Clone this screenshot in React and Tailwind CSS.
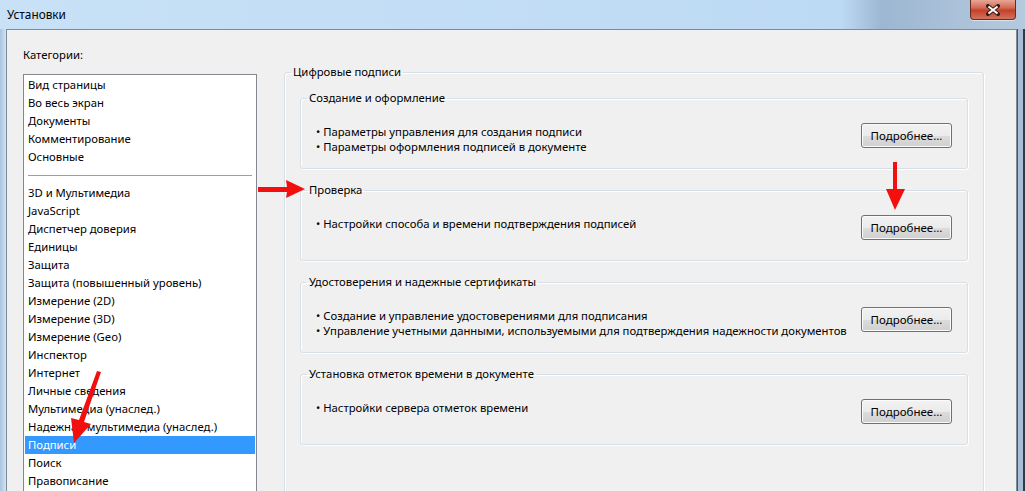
const topItems = ['Вид страницы', 'Во весь экран', 'Документы', 'Комментирование', 'Основные']
const restItems = [
  '3D и Мультимедиа',
  'JavaScript',
  'Диспетчер доверия',
  'Единицы',
  'Защита',
  'Защита (повышенный уровень)',
  'Измерение (2D)',
  'Измерение (3D)',
  'Измерение (Geo)',
  'Инспектор',
  'Интернет',
  'Личные сведения',
  'Мультимедиа (унаслед.)',
  'Надежная мультимедиа (унаслед.)',
  'Подписи',
  'Поиск',
  'Правописание',
]

const groups = [
  {
    title: 'Создание и оформление',
    lines: ['Параметры управления для создания подписи', 'Параметры оформления подписей в документе'],
  },
  { title: 'Проверка', lines: ['Настройки способа и времени подтверждения подписей'] },
  {
    title: 'Удостоверения и надежные сертификаты',
    lines: [
      'Создание и управление удостоверениями для подписания',
      'Управление учетными данными, используемыми для подтверждения надежности документов',
    ],
  },
  { title: 'Установка отметок времени в документе', lines: ['Настройки сервера отметок времени'] },
]

function ListItem({ text, selected }) {
  return (
    <div
      className={`h-[18px] whitespace-nowrap pl-[3px] leading-[18px] ${
        selected ? 'bg-[#3399ff] text-white' : 'text-black'
      }`}
    >
      {text}
    </div>
  )
}

function MoreButton() {
  return (
    <button className="h-[25px] w-[91px] shrink-0 rounded-[3px] border border-[#707070] bg-[linear-gradient(#f2f2f2_0%,#ebebeb_50%,#dddddd_51%,#cfcfcf_100%)] text-[11.5px] leading-[22px] text-black shadow-[inset_0_0_0_1px_#fbfbfb]">
      Подробнее...
    </button>
  )
}

function Group({ title, lines }) {
  return (
    <fieldset className="h-[79px] min-w-0 rounded-[3px] border border-[#d5dfe5] shadow-[inset_1px_1px_0_#fff,1px_1px_0_#fff]">
      <legend className="ml-[6px] px-[2px] leading-[16px]">{title}</legend>
      <div className="flex items-start justify-between pl-[15px] pr-[15px] pt-[17px]">
        <div className="pt-[1px] leading-[15px]">
          {lines.map((l) => (
            <div key={l} className="whitespace-nowrap">
              • {l}
            </div>
          ))}
        </div>
        <MoreButton />
      </div>
    </fieldset>
  )
}

function Arrows() {
  return (
    <svg className="pointer-events-none absolute left-0 top-0" width="1025" height="491">
      {/* pointing at "Проверка" */}
      <polygon points="258,187 287,187 286,180 305,189 286,198 287,192 258,192" fill="#f40f0f" />
      {/* pointing at the button */}
      <polygon points="893,162 897,162 897,189 905,189 895,210 886,189 893,189" fill="#f40f0f" />
      {/* pointing at the list item */}
      <polygon points="97,371 101,372 84,422 91,424 74,443 71,418 79,420" fill="#f40f0f" />
    </svg>
  )
}

export default function App() {
  return (
    <div className="relative h-[491px] w-[1025px] overflow-hidden bg-[#b9d1ea] font-['Noto_Sans',sans-serif] text-[11.3px] text-black">
      <div className="flex h-[29px] items-start bg-[linear-gradient(90deg,#c8e1f6_0%,#bddaf4_82%,#9db7d2_86%,#b6cade_100%)] pr-[9px]">
        <span className="pl-[7px] pt-[6px] text-[11.8px] leading-[16px]">Установки</span>
        <div className="ml-auto flex h-[20px] w-[46px] items-center justify-center rounded-b-[4px] border border-t-0 border-[#6b2a20] bg-[linear-gradient(#e7a696_0%,#d46b55_40%,#c4412a_55%,#d2735f_100%)] shadow-[0_1px_0_#ffffff80]">
          <svg width="14" height="12" viewBox="0 0 14 12">
            <path d="M2 2 L12 10 M12 2 L2 10" stroke="#3a1c16" strokeWidth="4" strokeLinecap="square" />
            <path d="M2.5 2.5 L11.5 9.5 M11.5 2.5 L2.5 9.5" stroke="#ffffff" strokeWidth="2" />
          </svg>
        </div>
      </div>

      <div className="flex h-[462px]">
        <div className="w-[6px] bg-[linear-gradient(90deg,#a9c3df,#d3e3f3)]" />
        <div className="flex flex-1 border-l border-r border-t border-[#7d8a97] bg-[#f0f0f0]">
          <div className="ml-[16px] w-[234px] shrink-0 pt-[17px]">
            <div className="leading-[16px]">Категории:</div>
            <div className="mt-[11px] h-[420px] border border-[#828790] bg-white p-[1px]">
              {topItems.map((t) => (
                <ListItem key={t} text={t} />
              ))}
              <div className="flex h-[18px] items-center px-[3px]">
                <div className="h-px w-full bg-[#7ea4cf]" />
              </div>
              {restItems.map((t) => (
                <ListItem key={t} text={t} selected={t === 'Подписи'} />
              ))}
            </div>
          </div>

          <div className="ml-[27px] pt-[34px]">
            <fieldset className="h-[500px] w-[700px] min-w-0 rounded-[3px] border border-[#d5dfe5] shadow-[inset_1px_1px_0_#fff,1px_1px_0_#fff]">
              <legend className="ml-[6px] px-[2px] leading-[16px]">Цифровые подписи</legend>
              <div className="flex flex-col gap-[13px] px-[15px] pt-[10px]">
                {groups.map((g) => (
                  <Group key={g.title} {...g} />
                ))}
              </div>
            </fieldset>
          </div>
        </div>
        <div className="flex w-[8px]">
          <div className="w-[1px] bg-[#4a5866]" />
          <div className="w-[5px] bg-[#a9bdd4]" />
          <div className="w-[2px] bg-[#2f3a44]" />
        </div>
      </div>

      <Arrows />
    </div>
  )
}
